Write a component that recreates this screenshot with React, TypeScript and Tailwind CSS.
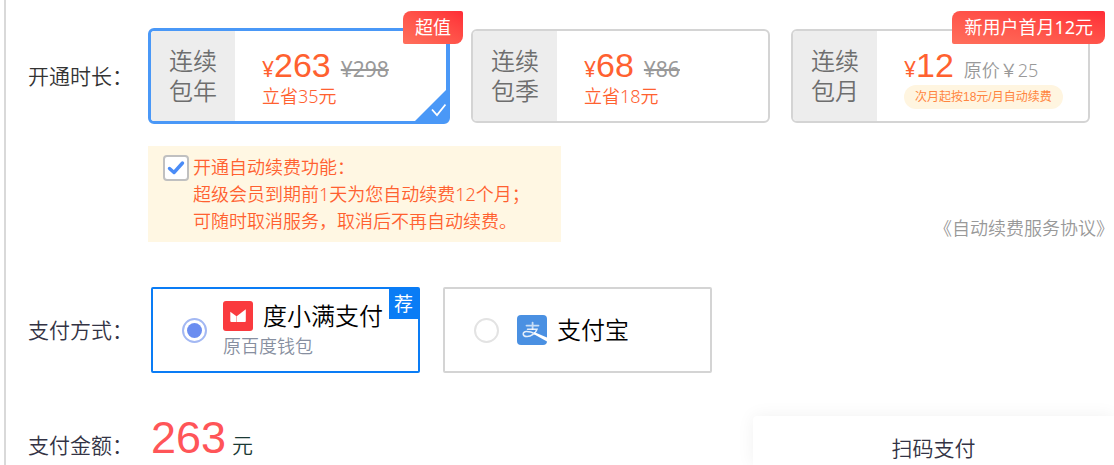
import { useState } from "react";
import type { ReactNode } from "react";

type PlanInfo = {
  id: string;
  period: string;
  price: string;
  was: ReactNode;
  note: ReactNode;
  badge?: string;
};

const struck = (text: string) => (
  <s className="text-[21px] leading-[28px] font-normal text-[#999999] decoration-2">{text}</s>
);

const saving = (text: string) => (
  <span className="text-[18px] leading-[26px] text-[#ff6130]">{text}</span>
);

const plans: PlanInfo[] = [
  { id: "year", period: "包年", price: "263", was: struck("¥298"), note: saving("立省35元"), badge: "超值" },
  { id: "quarter", period: "包季", price: "68", was: struck("¥86"), note: saving("立省18元") },
  {
    id: "month",
    period: "包月",
    price: "12",
    was: <span className="text-[18px] leading-[28px] text-[#999999]">原价￥25</span>,
    note: (
      <span className="mt-px rounded-full bg-[#fff5e0] px-[11px] font-['Liberation_Sans','Noto_Sans_CJK_SC',sans-serif] text-[12px] leading-[24px] font-normal whitespace-nowrap text-[#ff8540]">
        次月起按18元/月自动续费
      </span>
    ),
    badge: "新用户首月12元",
  },
];

function PlanCard({ plan, selected, onSelect }: { plan: PlanInfo; selected: boolean; onSelect: () => void }) {
  return (
    <label
      className={
        selected
          ? "relative flex h-24 cursor-pointer rounded-md border-[3px] border-r-4 border-[#4a98f7]"
          : "relative flex h-[94px] cursor-pointer rounded-md border-2 border-[#d4d4d4]"
      }
    >
      <input type="radio" name="plan" className="sr-only" checked={selected} onChange={onSelect} />
      <span className="flex w-[84px] shrink-0 flex-col items-center justify-center rounded-l-sm bg-[#ededed] text-[24px] leading-[30px] text-[#6e6e6e]">
        <span>连续</span>
        <span>{plan.period}</span>
      </span>
      <span className="flex flex-col items-start justify-center pt-1 pl-[27px] whitespace-nowrap">
        <span className="flex items-baseline">
          <span className="text-[21px] leading-[28px] font-normal text-[#ff6130]">¥</span>
          <span className="font-['Liberation_Sans',sans-serif] text-[34px] leading-[36px] font-normal text-[#ff6130]">
            {plan.price}
          </span>
          <span className="ml-2.5">{plan.was}</span>
        </span>
        {plan.note}
      </span>
      {plan.badge && (
        <span className="absolute -top-5 -right-[17px] rounded-tl-lg rounded-tr-xs rounded-br-lg rounded-bl-xs bg-linear-to-tr from-[#ff6f5c] to-[#ff2a36] px-[12px] text-[18px] leading-[33px] font-normal whitespace-nowrap text-white">
          {plan.badge}
        </span>
      )}
      {selected && (
        <svg className="absolute right-0 bottom-0 h-[31px] w-[31px]" viewBox="0 0 31 31" aria-hidden="true">
          <path d="M31 0V31H0Z" fill="#4a98f7" />
          <path d="M17 19.5L22 25L30.5 14.5" fill="none" stroke="#fff" strokeWidth="1.8" />
        </svg>
      )}
    </label>
  );
}

function DuxiaomanLogo() {
  return (
    <svg className="h-[30px] w-[30px]" viewBox="0 0 30 30" aria-hidden="true">
      <rect width="30" height="30" rx="3" fill="#fa3a3e" />
      <path d="M7.3 10.8L13.1 15V21H8.3Q7.3 21 7.3 20Z" fill="#fff" />
      <path d="M14 15L22.8 8.2V20Q22.8 21 21.8 21H14Z" fill="#fff" />
      <path d="M13.1 15H14V21H13.1Z" fill="#fff" opacity=".6" />
    </svg>
  );
}

function AlipayLogo() {
  return (
    <svg className="h-[30px] w-[30px]" viewBox="0 0 30 30" aria-hidden="true">
      <rect width="30" height="30" rx="4" fill="#4a90e2" />
      <g fill="none" stroke="#fff" strokeLinecap="round">
        <path d="M9.5 10.6H21.5M15.6 7.6V14" strokeWidth="1.8" opacity=".7" />
        <path d="M10.5 14.2H20C18.8 18 14 21.8 9.8 21.6C5.2 21.4 5 16.8 9.4 16.6C12 16.5 15 17.4 18.5 19" strokeWidth="1.5" opacity=".85" />
      </g>
      <path d="M17 17L30 22.6V26.4L17 19.2Z" fill="#fff" />
    </svg>
  );
}

function Radio({ id, checked, onChange }: { id: string; checked: boolean; onChange: () => void }) {
  return (
    <input
      id={id}
      type="radio"
      name="payment"
      checked={checked}
      onChange={onChange}
      className="h-[25px] w-[25px] shrink-0 appearance-none rounded-full border-2 border-[#e3e3e3] bg-white bg-clip-content p-[3px] checked:border-[#a3b8f3] checked:bg-[#6b8df0]"
    />
  );
}

export default function App() {
  const [plan, setPlan] = useState("year");
  const [payment, setPayment] = useState("duxiaoman");
  const [renew, setRenew] = useState(true);

  const payBox = "relative flex h-[86px] w-[269px] items-center rounded-xs border-2 pl-[29px]";

  return (
    <div className="bg-white pl-1 font-['Noto_Sans','Noto_Sans_CJK_SC',sans-serif] font-[350]">
      <main className="min-h-screen border-l-2 border-[#d9d9d9] pt-7 pl-[22px]">
        <section className="flex items-center">
          <h2 className="w-[120px] shrink-0 text-[21px] leading-[28px] text-[#333333]">开通时长：</h2>
          <div className="mr-6 grid flex-1 grid-cols-[302fr_299fr_299fr] items-center gap-[21px]">
            {plans.map((p) => (
              <PlanCard key={p.id} plan={p} selected={plan === p.id} onSelect={() => setPlan(p.id)} />
            ))}
          </div>
        </section>

        <section className="mt-[22px] ml-[120px] flex items-end justify-between">
          <div className="flex w-[413px] items-start bg-[#fff7e3] pt-2 pb-[7px] pl-[15px]">
            <span className="grid shrink-0 pt-px">
              <input
                id="renew"
                type="checkbox"
                checked={renew}
                onChange={(e) => setRenew(e.target.checked)}
                className="h-[26px] w-[26px] appearance-none rounded-sm border-2 border-[#c0c0c0] bg-white [grid-area:1/1]"
              />
              {renew && (
                <svg className="pointer-events-none h-[26px] w-[26px] [grid-area:1/1]" viewBox="0 0 26 26" aria-hidden="true">
                  <path d="M6.5 13.5L11 17.5L19.5 8" fill="none" stroke="#4a8cf7" strokeWidth="3.4" strokeLinecap="round" strokeLinejoin="round" />
                </svg>
              )}
            </span>
            <label htmlFor="renew" className="pl-1 text-[18px] leading-[27px] whitespace-nowrap text-[#ff6130]">
              开通自动续费功能：
              <br />
              超级会员到期前1天为您自动续费12个月；
              <br />
              可随时取消服务，取消后不再自动续费。
            </label>
          </div>
          <a href="#agreement" className="text-[18px] leading-[27px] whitespace-nowrap text-[#999999]">
            《自动续费服务协议》
          </a>
        </section>

        <section className="mt-[45px] flex items-center">
          <h2 className="w-[123px] shrink-0 text-[21px] leading-[28px] text-[#333344]">支付方式：</h2>
          <div className="flex gap-[23px]">
            <div className={payment === "duxiaoman" ? `${payBox} border-[#0a7cf5]` : `${payBox} border-[#d4d4d4]`}>
              <Radio id="duxiaoman" checked={payment === "duxiaoman"} onChange={() => setPayment("duxiaoman")} />
              <label htmlFor="duxiaoman" className="pl-4 whitespace-nowrap">
                <span className="flex items-center gap-[10px] text-[24px] leading-[32px] text-black">
                  <DuxiaomanLogo />
                  度小满支付
                </span>
                <span className="block text-[18px] leading-[28px] text-[#878fa0]">原百度钱包</span>
              </label>
              <span className="absolute top-0 right-0 bg-[#0a7cf5] px-[5px] text-[19px] leading-[30px] font-normal text-white">荐</span>
            </div>
            <div className={payment === "alipay" ? `${payBox} border-[#0a7cf5]` : `${payBox} border-[#d4d4d4]`}>
              <Radio id="alipay" checked={payment === "alipay"} onChange={() => setPayment("alipay")} />
              <label htmlFor="alipay" className="flex items-center gap-[10px] pl-[18px] text-[24px] leading-[32px] whitespace-nowrap text-black">
                <AlipayLogo />
                支付宝
              </label>
            </div>
          </div>
        </section>

        <section className="mt-[43px] flex items-start justify-between">
          <div className="flex items-baseline text-[21px] leading-[28px]">
            <h2 className="w-[123px] shrink-0 text-[#333344]">支付金额：</h2>
            <strong className="font-['Liberation_Sans',sans-serif] text-[45px] leading-[44px] font-normal text-[#ff5558]">263</strong>
            <span className="ml-[6px] text-[#1b3a35]">元</span>
          </div>
          <div className="w-[361px] rounded-tl-sm bg-white pt-[18px] pb-[3px] text-center text-[21px] leading-[28px] text-[#333344] shadow-[0_0_18px_rgba(0,0,0,0.06)]">
            扫码支付
          </div>
        </section>
      </main>
    </div>
  );
}
